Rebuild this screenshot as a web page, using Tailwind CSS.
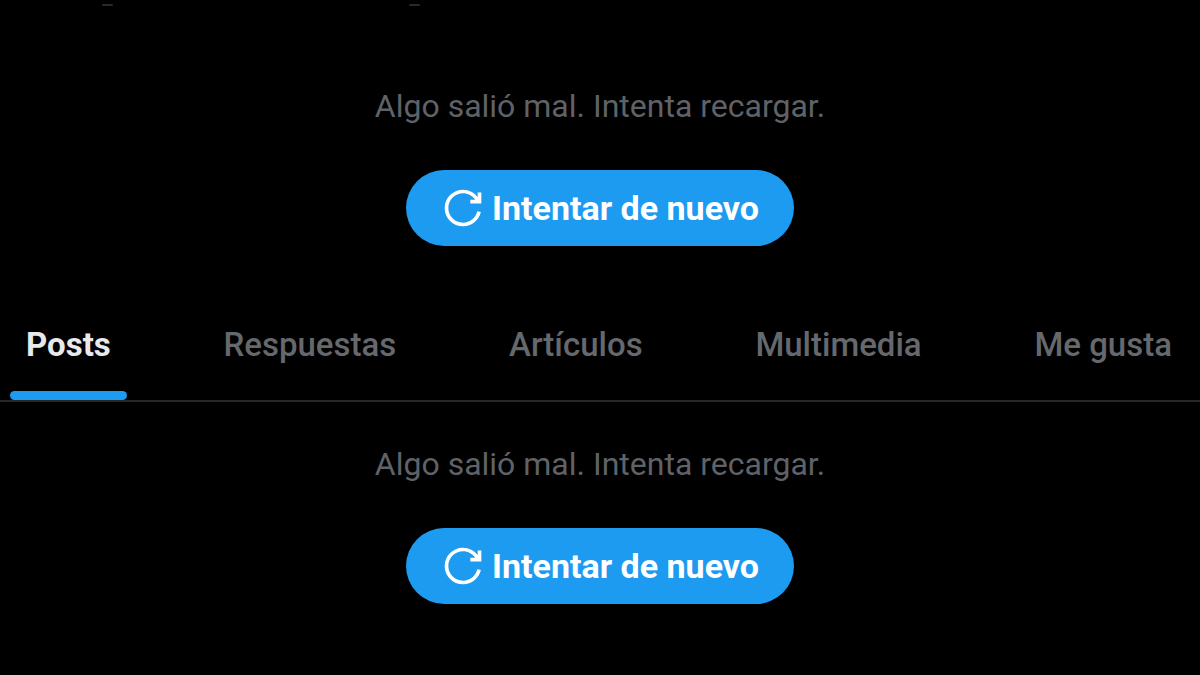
<!doctype html>
<html lang="es">
<head>
  <meta charset="UTF-8">
  <meta name="viewport" content="width=device-width, initial-scale=1.0">
  <title>Perfil</title>
  <script src="https://cdn.jsdelivr.net/npm/@tailwindcss/browser@4"></script>
</head>
<body class="min-h-screen overflow-x-hidden bg-black font-['Roboto','Liberation_Sans',sans-serif]">
  <!-- End of the scrolled-off row -->
  <div class="flex gap-[296px] pt-1 pl-[102px]" aria-hidden="true">
    <span class="h-[2px] w-[11px] rounded-full bg-[#2a2a2b]"></span>
    <span class="h-[2px] w-[11px] rounded-full bg-[#2a2a2b]"></span>
  </div>

  <section class="flex flex-col items-center pt-20">
    <p class="text-[32px] leading-10 text-[#5f6267]">Algo salió mal. Intenta recargar.</p>
    <button type="button" class="mt-11 flex h-[76px] cursor-pointer items-center gap-[7px] rounded-full bg-[#1d9bf0] px-[35px] text-[34px] leading-10 font-bold text-white hover:bg-[#1a8cd8]">
      <svg class="size-11" viewBox="0 0 24 24" fill="currentColor" aria-hidden="true">
        <path d="M12 4c-4.418 0-8 3.58-8 8s3.582 8 8 8c3.806 0 6.993-2.66 7.802-6.22l1.95.44C20.742 18.67 16.76 22 12 22 6.477 22 2 17.52 2 12S6.477 2 12 2c3.272 0 6.176 1.57 8 4V3.5h2v6h-6v-2h2.616C17.175 5.39 14.749 4 12 4z"/>
      </svg>
      <span>Intentar de nuevo</span>
    </button>
  </section>

  <nav class="mt-[54px] flex justify-between border-b-2 border-[#262729] pr-3 pl-[10px] text-[33px] leading-10 text-[#65686c]">
    <a href="#" class="px-4 pt-[25px] font-bold text-[#e7e9ea]" aria-current="page">
      Posts
      <span class="-mx-4 mt-[26px] block h-[9px] rounded-full bg-[#1d9bf0]"></span>
    </a>
    <a href="#" class="px-4 pt-[25px] font-medium">Respuestas</a>
    <a href="#" class="px-4 pt-[25px] font-medium">Artículos</a>
    <a href="#" class="px-4 pt-[25px] font-medium">Multimedia</a>
    <a href="#" class="px-4 pt-[25px] font-medium">Me gusta</a>
  </nav>

  <section class="flex flex-col items-center pt-[42px] pb-10">
    <p class="text-[32px] leading-10 text-[#5f6267]">Algo salió mal. Intenta recargar.</p>
    <button type="button" class="mt-11 flex h-[76px] cursor-pointer items-center gap-[7px] rounded-full bg-[#1d9bf0] px-[35px] text-[34px] leading-10 font-bold text-white hover:bg-[#1a8cd8]">
      <svg class="size-11" viewBox="0 0 24 24" fill="currentColor" aria-hidden="true">
        <path d="M12 4c-4.418 0-8 3.58-8 8s3.582 8 8 8c3.806 0 6.993-2.66 7.802-6.22l1.95.44C20.742 18.67 16.76 22 12 22 6.477 22 2 17.52 2 12S6.477 2 12 2c3.272 0 6.176 1.57 8 4V3.5h2v6h-6v-2h2.616C17.175 5.39 14.749 4 12 4z"/>
      </svg>
      <span>Intentar de nuevo</span>
    </button>
  </section>
</body>
</html>
